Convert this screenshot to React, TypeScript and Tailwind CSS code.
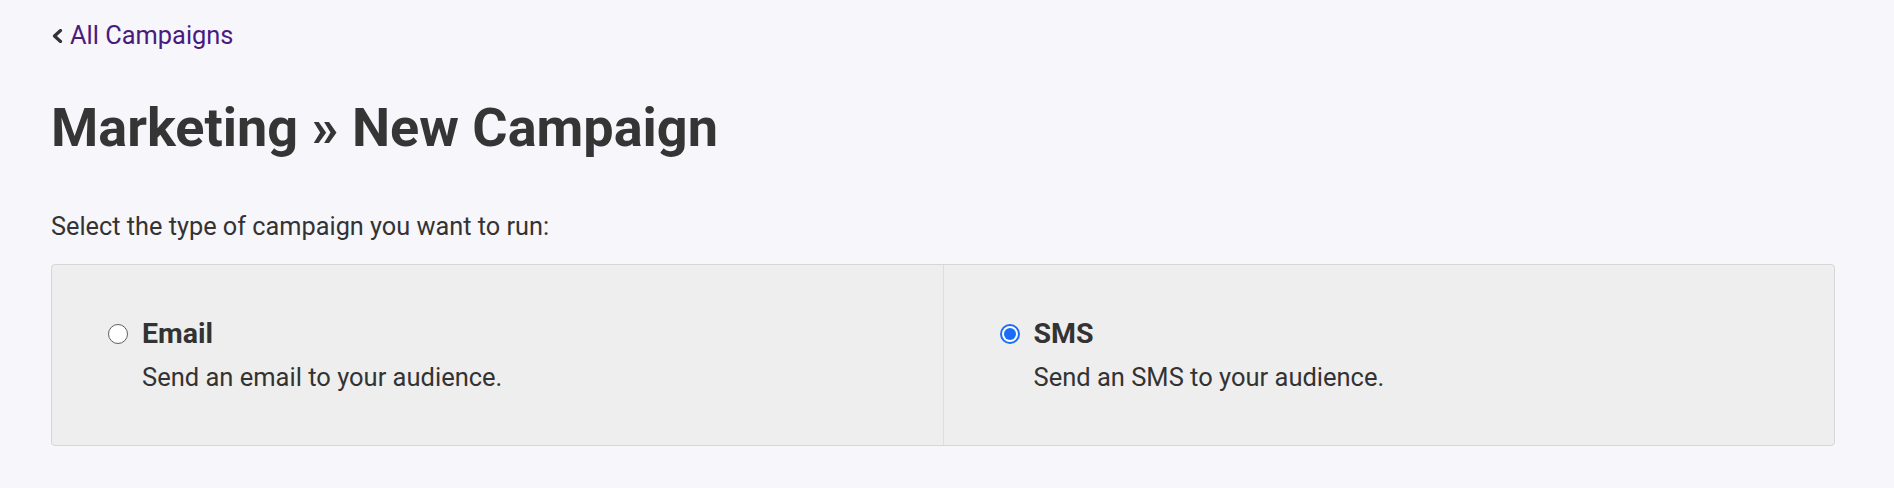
function Radio({ checked }: { checked: boolean }) {
  if (checked) {
    return (
      <span className="flex h-[20px] w-[20px] shrink-0 items-center justify-center rounded-full border-[2px] border-[#1a6ef5] bg-white">
        <span className="h-[12px] w-[12px] rounded-full bg-[#1a6ef5]" />
      </span>
    );
  }
  return <span className="h-[20px] w-[20px] shrink-0 rounded-full border border-[#5f5f5f] bg-white" />;
}

function Option({ title, text, checked, divider }: { title: string; text: string; checked: boolean; divider?: boolean }) {
  return (
    <label className={`flex flex-1 cursor-pointer gap-[14px] pl-[56px] pt-[52px] pb-[53px] ${divider ? "border-l border-[#dedede]" : ""}`}>
      <div className="flex h-[34px] items-center">
        <Radio checked={checked} />
      </div>
      <div>
        <div className="text-[28.5px] font-bold leading-[34px] text-[#333333]">{title}</div>
        <div className="mt-[11px] text-[25.5px] leading-[30px] text-[#333333]">{text}</div>
      </div>
    </label>
  );
}

export default function App() {
  return (
    <div className="min-h-screen bg-[#f7f6fb] pl-[51px] pr-[59px] pt-[20px] pb-[40px] font-['Roboto',sans-serif]">
      <a href="#" className="flex items-center gap-[7px] text-[25.4px] leading-[30px] text-[#4a1b7f]">
        <svg width="12" height="14" viewBox="0 0 12 14" className="mt-[2px]">
          <path d="M9.5 1.5 L3.5 7 L9.5 12.5" fill="none" stroke="#333333" strokeWidth="3.2" strokeLinecap="round" strokeLinejoin="round" />
        </svg>
        <span>All Campaigns</span>
      </a>

      <h1 className="mt-[46px] text-[54px] font-bold leading-[64px] text-[#353535]">Marketing » New Campaign</h1>

      <p className="mt-[52px] text-[25.3px] leading-[30px] text-[#333333]">Select the type of campaign you want to run:</p>

      <div className="mt-[22px] flex rounded-[4px] border border-[#d6d6d6] bg-[#eeeeee]">
        <Option title="Email" text="Send an email to your audience." checked={false} />
        <Option title="SMS" text="Send an SMS to your audience." checked divider />
      </div>
    </div>
  );
}
